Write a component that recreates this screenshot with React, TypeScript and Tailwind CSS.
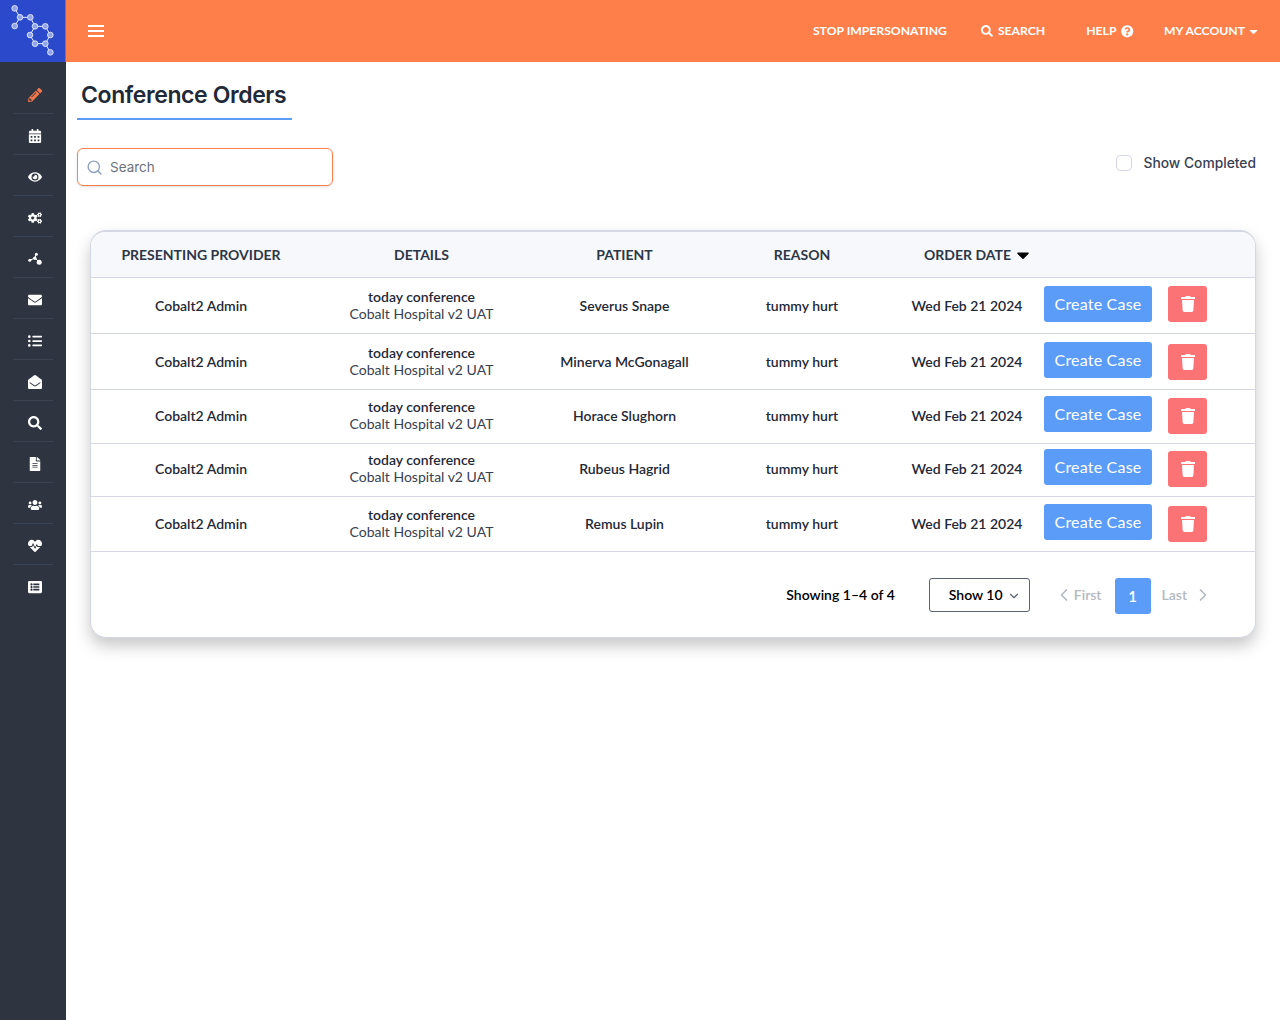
import { FaCalendarAlt, FaCaretDown, FaCogs, FaEnvelope, FaEnvelopeOpen, FaEye, FaFileAlt, FaHeartbeat, FaListAlt, FaListUl, FaPencilAlt, FaQuestionCircle, FaSearch, FaTrash, FaUsers } from "react-icons/fa";
import { FiChevronDown, FiChevronLeft, FiChevronRight, FiSearch } from "react-icons/fi";

const nodes = [[44, 25], [60, 52], [91, 52], [44, 78], [105, 79], [136, 79], [90, 105], [151, 105], [105, 131], [136, 131], [151, 157]];
const links = [[0, 1], [1, 2], [1, 3], [2, 4], [4, 5], [5, 7], [7, 9], [9, 8], [8, 6], [6, 4], [9, 10]];

const Logo = () => (
  <svg viewBox="0 0 198 186" className="w-[66px] h-[62px]">
    {links.map(([a, b]) => (
      <line key={`${a}-${b}`} x1={nodes[a][0]} y1={nodes[a][1]} x2={nodes[b][0]} y2={nodes[b][1]} stroke="#e8edfb" strokeWidth="3" />
    ))}
    {nodes.map(([x, y]) => (
      <circle key={`${x}-${y}`} cx={x} cy={y} r="8.5" fill="#8fa4ea" stroke="#eef1fc" strokeWidth="2.5" />
    ))}
  </svg>
);

const HubIcon = () => (
  <svg viewBox="0 0 14 14" className="w-[14px] h-[14px]" fill="white">
    <path d="M2 8.2 7 6 8 2.5M7 6 11 10" stroke="white" strokeWidth="1" fill="none" />
    <circle cx="1.8" cy="8.3" r="1.5" />
    <circle cx="6.8" cy="6.2" r="1.8" />
    <circle cx="8.4" cy="2.2" r="1.5" />
    <circle cx="11.2" cy="10.2" r="2.5" />
  </svg>
);

const sideIcons = [
  <FaPencilAlt className="text-[#f2774a]" />,
  <FaCalendarAlt />,
  <FaEye />,
  <FaCogs />,
  <HubIcon />,
  <FaEnvelope />,
  <FaListUl />,
  <FaEnvelopeOpen />,
  <FaSearch />,
  <FaFileAlt />,
  <FaUsers />,
  <FaHeartbeat />,
  <FaListAlt />,
];

const rows = [
  { patient: "Severus Snape", height: "h-[56px]", top: "pt-2", trash: "mt-0", detail: "-mt-[2px]" },
  { patient: "Minerva McGonagall", height: "h-[56px]", top: "pt-2", trash: "mt-[2px]", detail: "-mt-[2px]" },
  { patient: "Horace Slughorn", height: "h-[54px] pb-[2px]", top: "pt-[6px]", trash: "mt-[2px]", detail: "-mt-[2px]" },
  { patient: "Rubeus Hagrid", height: "h-[53px] pb-[4px]", top: "pt-[5px]", trash: "mt-[2px]", detail: "mt-0" },
  { patient: "Remus Lupin", height: "h-[55px] pb-[2px]", top: "pt-[7px]", trash: "mt-[2px]", detail: "mt-0" },
];

const gridCols = "grid grid-cols-[214px_227px_179px_176px_154px_1fr] pl-[3px] items-center text-center";

const App = () => {
  return (
    <div className="flex h-[1020px] w-[1280px] overflow-hidden bg-white [font-family:Lato,sans-serif]">
      {/* Sidebar */}
      <aside className="w-[66px] shrink-0 bg-[#2e3541] flex flex-col">
        <div className="h-[62px] bg-[#2b4acb] border-r border-[#5c76d8]">
          <Logo />
        </div>
        <nav className="pt-[11px] flex flex-col items-center">
          {sideIcons.map((icon, i) => (
            <div
              key={i}
              className={`w-[40px] h-[41px] flex items-center justify-center pl-[4px] pt-[3px] text-white text-[14px] ${i < sideIcons.length - 1 ? "border-b border-[#3a4352]" : ""}`}
            >
              {icon}
            </div>
          ))}
        </nav>
      </aside>

      <div className="flex-1 min-w-0 flex flex-col">
        {/* Top bar */}
        <header className="h-[62px] bg-[#ff7f4a] flex items-center text-white text-[12.2px] font-bold pl-[22px] pr-[20px]">
          <div className="flex flex-col gap-[3px] w-[16px]">
            <span className="h-[2px] bg-white" />
            <span className="h-[2px] bg-white" />
            <span className="h-[2px] bg-white" />
          </div>
          <div className="ml-auto flex items-center pt-[1px]">
            <span>STOP IMPERSONATING</span>
            <span className="flex items-center ml-[34px]">
              <FaSearch className="text-[12px] mr-[5px]" />
              SEARCH
            </span>
            <span className="flex items-center ml-[41px]">
              HELP
              <FaQuestionCircle className="text-[12.5px] ml-[5px]" />
            </span>
            <span className="flex items-center ml-[30px]">
              MY ACCOUNT
              <FaCaretDown className="text-[13px] ml-[2px]" />
            </span>
          </div>
        </header>

        <main className="flex-1 pl-[11px] pr-[24px]">
          <h1 className="w-[215px] h-[58px] pt-[16px] pl-[4px] border-b-2 border-[#5b9cf8] text-[23px] leading-[34px] font-semibold tracking-[-0.4px] whitespace-nowrap text-[#1f2937] [font-family:Inter,sans-serif]">
            Conference Orders
          </h1>

          <div className="flex justify-between items-start mt-[28px]">
            <div className="w-[256px] h-[38px] rounded-[6px] border border-[#ff7f4a] shadow-sm flex items-center pl-[8px] [font-family:Inter,sans-serif]">
              <FiSearch className="text-[17px] text-[#8fa3bf]" />
              <span className="ml-[7px] text-[13.5px] text-[#6b7280]">Search</span>
            </div>
            <label className="flex items-center mt-[6px] [font-family:Inter,sans-serif]">
              <span className="w-[16px] h-[16px] rounded-[4px] border border-[#d5d8e3] bg-white" />
              <span className="ml-[12px] text-[13.8px] leading-[18px] font-medium text-[#374151]">Show Completed</span>
            </label>
          </div>

          {/* Orders table */}
          <section className="ml-[13px] mt-[44px] w-[1166px] rounded-[16px] border border-t-2 border-[#d5d8e3] bg-white shadow-[0_8px_16px_rgba(0,0,0,0.22)] overflow-hidden">
            <div className={`${gridCols} h-[46px] bg-[#f7f8fb] border-b border-[#d5d8e3] text-[14px] font-bold text-[#2d3748]`}>
              <span>PRESENTING PROVIDER</span>
              <span>DETAILS</span>
              <span>PATIENT</span>
              <span>REASON</span>
              <span className="whitespace-nowrap flex items-center justify-center ml-[23px]">
                ORDER DATE
                <FaCaretDown className="text-[20px] ml-[2px] text-black" />
              </span>
            </div>

            {rows.map((row) => (
              <div key={row.patient} className={`${gridCols} ${row.height} border-b border-[#d5d8e3] text-[14px] text-[#1f2937]`}>
                <span className="font-semibold">Cobalt2 Admin</span>
                <div className={`leading-[17px] ${row.detail}`}>
                  <div className="font-semibold">today conference</div>
                  <div className="text-[#374151]">Cobalt Hospital v2 UAT</div>
                </div>
                <span className="font-semibold">{row.patient}</span>
                <span className="font-semibold">tummy hurt</span>
                <span className="font-semibold whitespace-nowrap">Wed Feb 21 2024</span>
                <div className={`flex items-start self-start ${row.top}`}>
                  <button className="w-[108px] h-[36px] rounded-[3px] bg-[#5b9cf8] text-white text-[16px] tracking-[0.2px]">Create Case</button>
                  <button className={`w-[39px] h-[36px] ml-[16px] rounded-[3px] bg-[#fb7375] text-white flex items-center justify-center ${row.trash}`}>
                    <FaTrash className="text-[16px]" />
                  </button>
                </div>
              </div>
            ))}

            {/* Footer */}
            <div className="h-[85px] flex items-start justify-end pt-[26px] pr-[42px] text-[14px]">
              <span className="font-semibold text-black leading-[34px]">Showing 1–4 of 4</span>
              <div className="ml-[34px] w-[101px] h-[34px] rounded-[3px] border border-[#5a6270] flex items-center pl-[19px] pb-[2px] font-semibold text-black">
                Show 10
                <FiChevronDown className="text-[14px] ml-[4px] mt-[3px] text-[#5a6270]" />
              </div>
              <div className="flex items-center h-[36px] ml-[24px] text-[#b4b8bf] font-semibold">
                <FiChevronLeft className="text-[20px] -mt-[2px]" />
                <span className="leading-[34px] pb-[2px]">First</span>
                <span className="ml-[13px] w-[36px] h-[36px] rounded-[3px] bg-[#5b9cf8] text-white flex items-center justify-center text-[15px]">1</span>
                <span className="ml-[11px] leading-[34px] pb-[2px]">Last</span>
                <FiChevronRight className="text-[20px] ml-[6px] -mt-[2px]" />
              </div>
            </div>
          </section>
        </main>
      </div>
    </div>
  );
};

export default App;
